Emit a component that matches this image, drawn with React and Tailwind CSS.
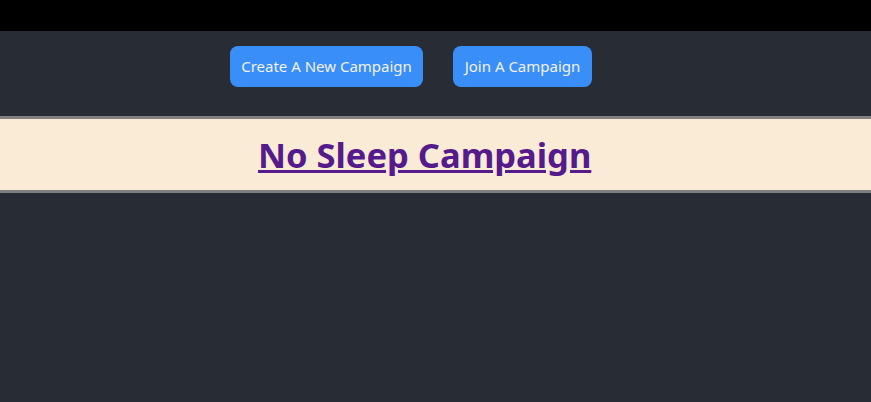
export default function App() {
  return (
    <div className="min-h-screen bg-[#282c34] font-['Noto_Sans',sans-serif]">
      {/* top bar */}
      <div className="h-[31px] bg-black" />

      {/* actions */}
      <div className="flex gap-[30px] pl-[230px] pt-[15px] pb-[29px]">
        <button className="h-[41px] w-[193px] rounded-lg bg-[#3a8ef8] text-[15px] text-[#f2f2f2]">
          Create A New Campaign
        </button>
        <button className="h-[41px] w-[139px] rounded-lg bg-[#3a8ef8] text-[15px] text-[#f2f2f2]">
          Join A Campaign
        </button>
      </div>

      {/* campaign list */}
      <div className="border-y-[3px] border-[#808080] bg-[#faebd7]">
        <div className="flex h-[71px] items-center pl-[258px]">
          <a href="#" className="text-[34.5px] font-bold text-[#551a8b] underline">
            No Sleep Campaign
          </a>
        </div>
      </div>
    </div>
  );
}
